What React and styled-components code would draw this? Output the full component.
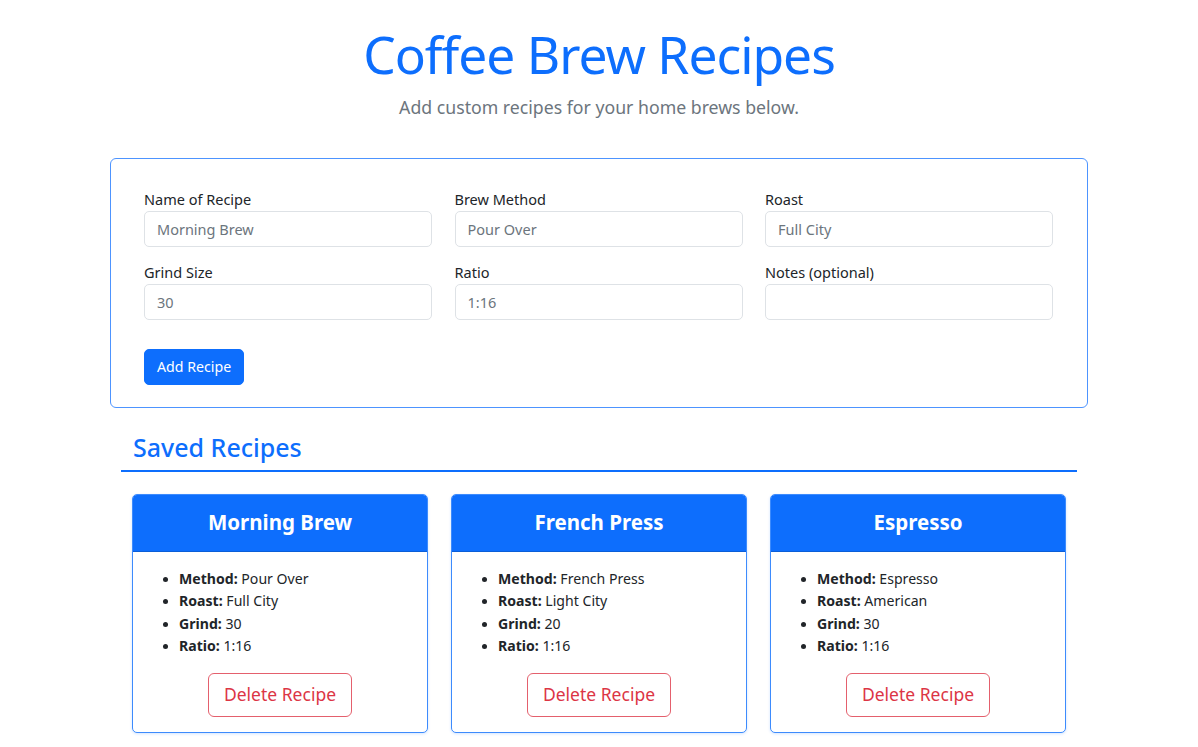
import React from "react";
import styled, { createGlobalStyle } from "styled-components";

const Global = createGlobalStyle`
  html, body { margin: 0; padding: 0; background: #fff; }
  body {
    font-family: "Noto Sans", "Open Sans", "Liberation Sans", sans-serif;
    font-size: 15px;
    color: #212529;
    line-height: 1.5;
  }
  * { box-sizing: border-box; }
`;

const Page = styled.div`
  padding: 22px 0 14px;
`;

const Header = styled.header`
  text-align: center;
  margin-bottom: 38px;
`;

const Title = styled.h1`
  margin: 0;
  font-size: 51.5px;
  font-weight: 400;
  line-height: 64px;
  color: #0d6efd;
  letter-spacing: -1px;
`;

const Lead = styled.p`
  margin: 8px 0 0;
  font-size: 17.7px;
  line-height: 26px;
  font-weight: 400;
  color: #6c757d;
`;

const FormCard = styled.form`
  width: 978px;
  margin: 0 auto;
  border: 1px solid #4d94ff;
  border-radius: 6px;
  padding: 30px 34px 22px 33px;
`;

const FieldGrid = styled.div`
  display: grid;
  grid-template-columns: repeat(3, 288px);
  column-gap: 22.5px;
  row-gap: 15px;
`;

const Field = styled.label`
  display: flex;
  flex-direction: column;
  gap: 0;
  font-size: 14.5px;
`;

const Input = styled.input`
  height: 36px;
  border: 1px solid #dee2e6;
  border-radius: 5px;
  padding: 0 12px;
  font: inherit;
  font-size: 14.5px;
  color: #212529;
  &::placeholder { color: #6c757d; }
`;

const PrimaryButton = styled.button`
  margin-top: 29px;
  height: 36px;
  padding: 0 12px;
  border: 1px solid #0d6efd;
  background: #0d6efd;
  color: #fff;
  border-radius: 5px;
  font: inherit;
  font-size: 14.2px;
  cursor: pointer;
`;

const Saved = styled.section`
  width: 956px;
  margin: 24px auto 0;
`;

const SavedTitle = styled.h2`
  margin: 0;
  padding: 0 12px 8px;
  font-size: 25px;
  font-weight: 500;
  line-height: 1.2;
  color: #0d6efd;
  border-bottom: 2px solid #0d6efd;
`;

const CardRow = styled.div`
  display: grid;
  grid-template-columns: repeat(3, 296px);
  column-gap: 23px;
  padding: 22px 11px 0;
`;

const Card = styled.article`
  border: 1px solid #3d8bfd;
  border-radius: 5px;
  overflow: hidden;
  box-shadow: 0 1px 3px rgba(13, 110, 253, 0.18);
  background: #fff;
`;

const CardHeader = styled.h3`
  margin: 0;
  height: 57px;
  display: flex;
  align-items: center;
  justify-content: center;
  background: #0d6efd;
  color: #fff;
  font-size: 20.5px;
  font-weight: 700;
  border-bottom: 1px solid #0b5ed7;
`;

const CardBody = styled.div`
  padding: 16px 16px 15px;
  display: flex;
  flex-direction: column;
  align-items: center;
`;

const List = styled.ul`
  align-self: stretch;
  margin: 0 0 15px;
  padding-left: 30px;
  font-size: 14.1px;
  line-height: 22.5px;
  li::marker { font-size: 13px; }
`;

const DeleteButton = styled.button`
  width: 144px;
  height: 44px;
  border: 1px solid #e4606d;
  background: #fff;
  color: #dc3545;
  border-radius: 6px;
  font: inherit;
  font-size: 17.5px;
  cursor: pointer;
`;

const recipes = [
  { name: "Morning Brew", method: "Pour Over", roast: "Full City", grind: "30", ratio: "1:16" },
  { name: "French Press", method: "French Press", roast: "Light City", grind: "20", ratio: "1:16" },
  { name: "Espresso", method: "Espresso", roast: "American", grind: "30", ratio: "1:16" },
];

const fields = [
  { label: "Name of Recipe", placeholder: "Morning Brew" },
  { label: "Brew Method", placeholder: "Pour Over" },
  { label: "Roast", placeholder: "Full City" },
  { label: "Grind Size", placeholder: "30" },
  { label: "Ratio", placeholder: "1:16" },
  { label: "Notes (optional)", placeholder: "" },
];

export default function App() {
  return (
    <Page>
      <Global />
      <Header>
        <Title>Coffee Brew Recipes</Title>
        <Lead>Add custom recipes for your home brews below.</Lead>
      </Header>
      <FormCard onSubmit={(e) => e.preventDefault()}>
        <FieldGrid>
          {fields.map((f) => (
            <Field key={f.label}>
              {f.label}
              <Input placeholder={f.placeholder} />
            </Field>
          ))}
        </FieldGrid>
        <PrimaryButton type="submit">Add Recipe</PrimaryButton>
      </FormCard>
      <Saved>
        <SavedTitle>Saved Recipes</SavedTitle>
        <CardRow>
          {recipes.map((r) => (
            <Card key={r.name}>
              <CardHeader>{r.name}</CardHeader>
              <CardBody>
                <List>
                  <li><b>Method:</b> {r.method}</li>
                  <li><b>Roast:</b> {r.roast}</li>
                  <li><b>Grind:</b> {r.grind}</li>
                  <li><b>Ratio:</b> {r.ratio}</li>
                </List>
                <DeleteButton>Delete Recipe</DeleteButton>
              </CardBody>
            </Card>
          ))}
        </CardRow>
      </Saved>
    </Page>
  );
}
